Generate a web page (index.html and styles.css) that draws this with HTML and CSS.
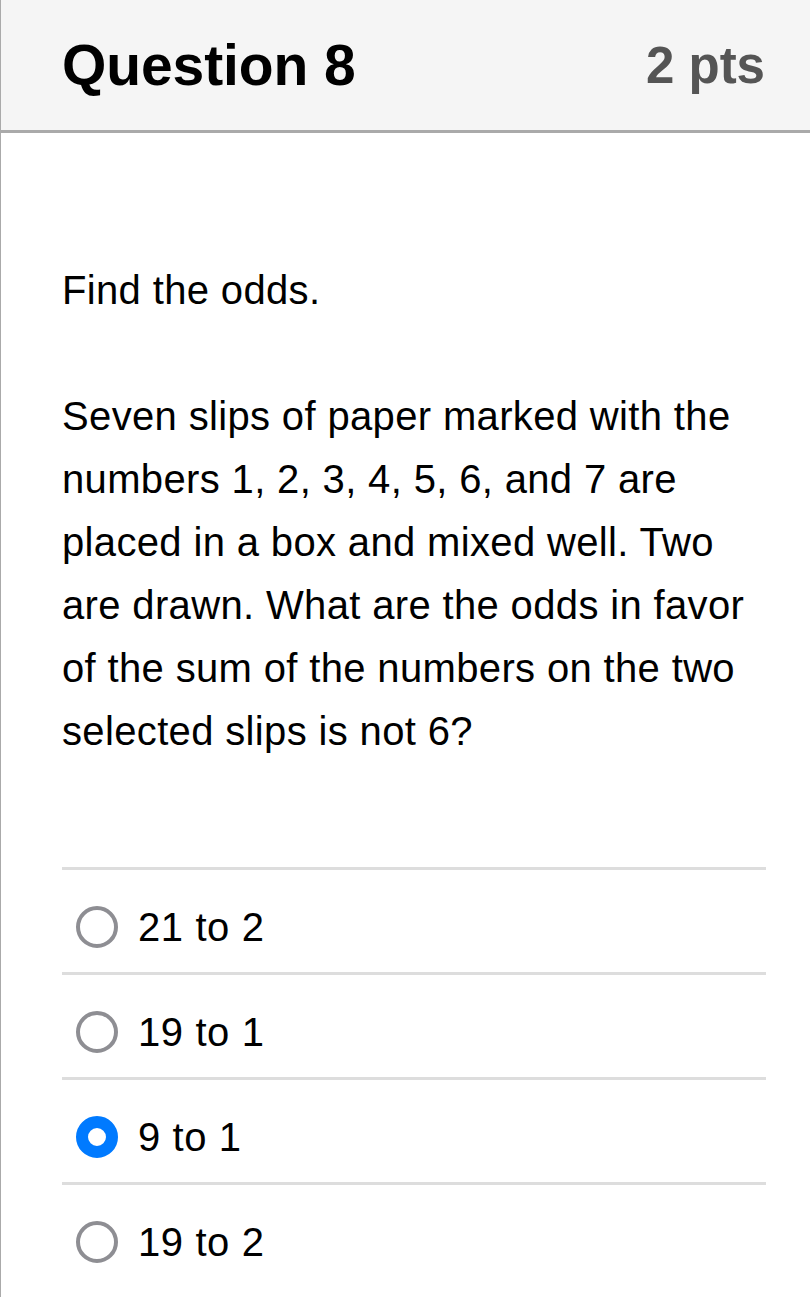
FILE: index.html
```
<!DOCTYPE html>
<html>
<head>
<meta charset="utf-8">
<link rel="stylesheet" href="styles.css">
</head>
<body>
<div class="card">
  <div class="header">
    <div class="title">Question 8</div>
    <div class="pts">2 pts</div>
  </div>
  <div class="content">
    <p class="lead">Find the odds.</p>
    <p class="question">Seven slips of paper marked with the numbers 1, 2, 3, 4, 5, 6, and 7 are placed in a box and mixed well. Two are drawn. What are the odds in favor of the sum of the numbers on the two selected slips is not 6?</p>
    <div class="answers">
      <div class="option"><span class="radio"></span><span class="label">21 to 2</span></div>
      <div class="option"><span class="radio"></span><span class="label">19 to 1</span></div>
      <div class="option"><span class="radio checked"></span><span class="label">9 to 1</span></div>
      <div class="option"><span class="radio"></span><span class="label">19 to 2</span></div>
    </div>
  </div>
</div>
</body>
</html>
```
FILE: styles.css
```
html, body {
  margin: 0;
  padding: 0;
  background: #fff;
}
body {
  font-family: "Liberation Sans", Arial, sans-serif;
  color: #000;
  overflow: hidden;
}
.card {
  border-left: 1px solid #aaa;
  min-height: 1297px;
}
.header {
  height: 130px;
  background: #f5f5f5;
  border-bottom: 3px solid #aaa;
  display: flex;
  align-items: center;
  justify-content: space-between;
  padding: 0 45px 0 61px;
}
.title {
  font-size: 57px;
  font-weight: bold;
  letter-spacing: -0.1px;
}
.pts {
  font-size: 51px;
  font-weight: bold;
  color: #555;
}
.content {
  padding: 126px 44px 0 61px;
}
.lead, .question {
  margin: 0;
  font-size: 40px;
  line-height: 63px;
  letter-spacing: 0.35px;
}
.question {
  margin-top: 63px;
}
.answers {
  margin-top: 104px;
}
.option {
  border-top: 3px solid #ddd;
  height: 90px;
  padding-top: 12px;
  display: flex;
  align-items: center;
}
.radio {
  box-sizing: border-box;
  width: 42px;
  height: 42px;
  border-radius: 50%;
  border: 4px solid #8e8e93;
  margin-left: 14px;
  margin-right: 20px;
  flex: none;
}
.radio.checked {
  border: 12px solid #007aff;
}
.label {
  font-size: 40px;
  letter-spacing: 0.6px;
}
```
